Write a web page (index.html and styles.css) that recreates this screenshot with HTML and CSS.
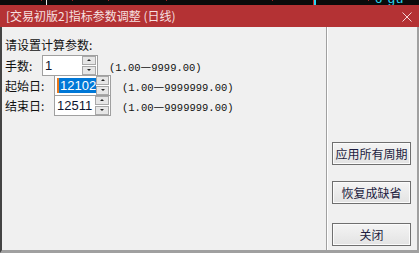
FILE: index.html
```html
<!DOCTYPE html>
<html lang="zh-CN">
<head>
    <meta charset="UTF-8">
    <meta name="viewport" content="width=device-width, initial-scale=1.0">
    <title>指标参数调整</title>
    <link rel="stylesheet" href="styles.css">
</head>
<body>
    <!-- 桌面背景残留 -->
    <div class="desk">
        <span class="mark dot" style="margin-left: 41px"></span>
        <span class="mark line" style="margin-left: 4px"></span>
        <span class="mark dot" style="margin-left: 25px"></span>
        <span class="mark dot" style="margin-left: 35px"></span>
        <span class="mark dot" style="margin-left: 57px"></span>
        <span class="mark dot" style="margin-left: 105px"></span>
        <span class="mark cyan" style="margin-left: 40px"></span>
        <span class="mark dot" style="margin-left: 52px"></span>
        <span class="ticker">6 gu</span>
    </div>

    <div class="dialog">
        <!-- 标题栏 -->
        <div class="titlebar">
            <span class="title">[交易初版2]指标参数调整 (日线)</span>
            <svg class="close" width="10" height="10" viewBox="0 0 10 10">
                <path d="M0.5 0.5 L9.5 9.5 M9.5 0.5 L0.5 9.5" stroke="#f3d6d6" stroke-width="1" fill="none"/>
            </svg>
        </div>

        <div class="body">
            <!-- 参数区 -->
            <section class="params">
                <p class="caption">请设置计算参数:</p>

                <div class="row">
                    <span class="label short">手数:</span>
                    <div class="spinbox w1">
                        <span class="value">1</span>
                        <div class="spin"><i class="up"></i><i class="down"></i></div>
                    </div>
                    <span class="range">(1.00<b>—</b>9999.00)</span>
                </div>

                <div class="row">
                    <span class="label">起始日:</span>
                    <div class="spinbox w2">
                        <span class="value"><em class="caret"></em><span class="selected">12102</span></span>
                        <div class="spin"><i class="up"></i><i class="down"></i></div>
                    </div>
                    <span class="range">(1.00<b>—</b>9999999.00)</span>
                </div>

                <div class="row">
                    <span class="label">结束日:</span>
                    <div class="spinbox w2">
                        <span class="value">12511</span>
                        <div class="spin"><i class="up"></i><i class="down"></i></div>
                    </div>
                    <span class="range">(1.00<b>—</b>9999999.00)</span>
                </div>
            </section>

            <!-- 按钮区 -->
            <section class="actions">
                <button class="btn first">应用所有周期</button>
                <button class="btn second">恢复成缺省</button>
                <button class="btn third">关闭</button>
            </section>
        </div>
    </div>
</body>
</html>
```

FILE: styles.css
```css
* {
    margin: 0;
    padding: 0;
    box-sizing: border-box;
}

body {
    width: 419px;
    height: 253px;
    overflow: hidden;
    font-family: "Noto Sans CJK SC", sans-serif;
    font-size: 12px;
    background: #0b0b0b;
}

/* 顶部黑色桌面 */
.desk {
    height: 5px;
    display: flex;
    align-items: flex-start;
    overflow: hidden;
}

.mark {
    display: block;
    flex: none;
}

.mark.dot {
    width: 1px;
    height: 1px;
    background: #a02020;
}

.mark.line {
    width: 1px;
    height: 5px;
    background: #e8e8e8;
}

.mark.cyan {
    width: 3px;
    height: 5px;
    border-left: 1px solid #d02828;
    background: #29d4f0;
}

.ticker {
    margin-left: 6px;
    margin-top: -8px;
    color: #29d4f0;
    font-family: "Liberation Sans", sans-serif;
    font-size: 13px;
    line-height: 13px;
    letter-spacing: 1px;
    flex: none;
}

/* 对话框 */
.dialog {
    height: 248px;
    display: flex;
    flex-direction: column;
}

.titlebar {
    height: 22px;
    background: #b43234;
    display: flex;
    align-items: center;
    justify-content: space-between;
    padding: 0 7px 0 6px;
}

.title {
    color: #f6e0e0;
    font-size: 12px;
    line-height: 22px;
}

.close {
    margin-top: 1px;
}

.body {
    flex: 1;
    background: #f0f0f0;
    border-left: 2px solid #444;
    border-right: 2px solid #a0a0a0;
    border-bottom: 3px solid #a0a0a0;
    display: grid;
    grid-template-columns: 1fr 91px;
}

.params {
    padding: 9px 0 0 3px;
    color: #111;
}

.caption {
    line-height: 18px;
    margin-bottom: 1px;
}

.row {
    display: flex;
    align-items: center;
    height: 20px;
}

.label {
    width: 49px;
    flex: none;
}

.label.short {
    width: 37px;
}

/* 微调框 */
.spinbox {
    height: 21px;
    border: 1px solid #a0a0a0;
    background: #fff;
    display: flex;
    align-items: center;
    flex: none;
}

.spinbox.w1 {
    width: 56px;
}

.spinbox.w2 {
    width: 57px;
}

.value {
    flex: 1;
    display: flex;
    align-items: center;
    padding-left: 2px;
    font-family: "Liberation Sans", sans-serif;
    font-size: 13px;
    color: #0c1530;
}

.caret {
    width: 2px;
    height: 15px;
    background: #e8791c;
}

.selected {
    background: #0078d7;
    color: #fff;
    line-height: 15px;
    padding-left: 1px;
    width: 37px;
}

.spin {
    width: 15px;
    height: 19px;
    display: flex;
    flex-direction: column;
    gap: 1px;
    padding-right: 1px;
}

.spin i {
    flex: 1;
    display: flex;
    align-items: center;
    justify-content: center;
    background: #e6e6e6;
    border: 1px solid #a8a8a8;
}

.spin i::after {
    content: "";
    width: 0;
    height: 0;
    border-left: 2px solid transparent;
    border-right: 2px solid transparent;
}

.spin .up::after {
    border-bottom: 2px solid #222;
}

.spin .down::after {
    border-top: 2px solid #222;
}

.range {
    margin-left: 11px;
    font-family: "Liberation Mono", monospace;
    font-size: 10.5px;
    color: #111;
}

.range b {
    font-family: "Noto Sans CJK SC", sans-serif;
    font-weight: normal;
    font-size: 12px;
}

/* 右侧按钮 */
.actions {
    border-left: 1px solid #a0a0a0;
    box-shadow: inset 1px 0 #ffffff;
    padding: 115px 0 0 5px;
    display: flex;
    flex-direction: column;
}

.btn {
    width: 79px;
    height: 23px;
    border: 1px solid #6f6f6f;
    background: linear-gradient(#f4f4f4, #e3e3e3);
    box-shadow: inset 0 0 0 1px #fbfbfb;
    color: #1c1c40;
    font-family: "Noto Sans CJK SC", sans-serif;
    font-size: 12px;
}

.btn.second {
    margin-top: 16px;
}

.btn.third {
    margin-top: 19px;
}
```
